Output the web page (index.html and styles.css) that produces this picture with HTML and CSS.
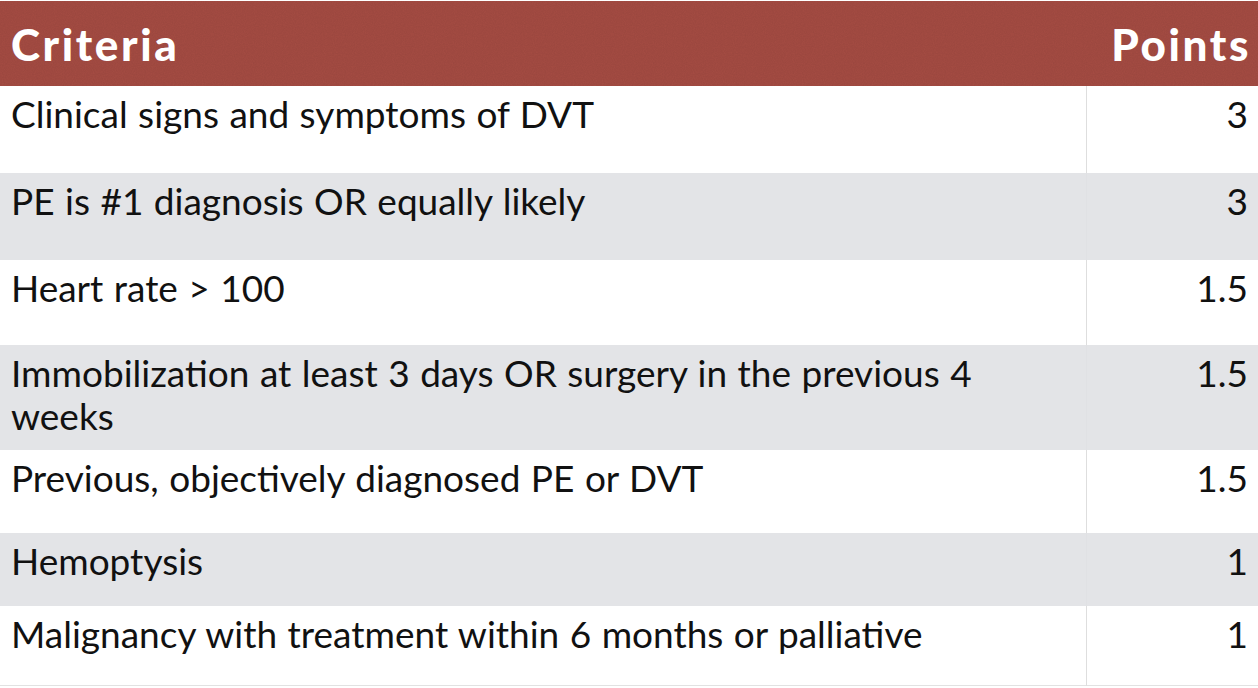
FILE: index.html
```html
<!DOCTYPE html>
<html>
<head>
<meta charset="utf-8">
<link rel="stylesheet" href="styles.css">
</head>
<body>
<table class="wells">
  <thead>
    <tr class="head">
      <th class="crit">Criteria</th>
      <th class="pts">Points</th>
    </tr>
  </thead>
  <tbody>
    <tr class="row white h87">
      <td class="crit">Clinical signs and symptoms of DVT</td>
      <td class="pts">3</td>
    </tr>
    <tr class="row grey h87">
      <td class="crit">PE is #1 diagnosis OR equally likely</td>
      <td class="pts">3</td>
    </tr>
    <tr class="row white h85">
      <td class="crit">Heart rate &gt; 100</td>
      <td class="pts">1.5</td>
    </tr>
    <tr class="row grey h105">
      <td class="crit">Immobilization at least 3 days OR surgery in the previous 4<br>weeks</td>
      <td class="pts">1.5</td>
    </tr>
    <tr class="row white h83">
      <td class="crit">Previous, objectively diagnosed PE or DVT</td>
      <td class="pts">1.5</td>
    </tr>
    <tr class="row grey h73">
      <td class="crit">Hemoptysis</td>
      <td class="pts">1</td>
    </tr>
    <tr class="row white h79 last">
      <td class="crit">Malignancy with treatment within 6 months or palliative</td>
      <td class="pts">1</td>
    </tr>
  </tbody>
</table>
</body>
</html>
```

FILE: styles.css
```css
html, body {
  margin: 0;
  padding: 0;
  background: #ffffff;
}

body {
  padding-top: 1px;
  font-family: "Lato", "Noto Sans", sans-serif;
  color: #111111;
}

.wells {
  width: 1258px;
  border-collapse: collapse;
  table-layout: fixed;
}

.wells .crit {
  width: 1074px;
  text-align: left;
  padding-left: 11px;
}

.wells .pts {
  text-align: right;
  padding-right: 10px;
}

.head {
  height: 85px;
  background-color: #a64c43;
  background-image: url("data:image/svg+xml;utf8,<svg xmlns='http://www.w3.org/2000/svg' width='200' height='200'><filter id='n'><feTurbulence type='fractalNoise' baseFrequency='0.9' numOctaves='2' stitchTiles='stitch'/><feColorMatrix values='0 0 0 0 0  0 0 0 0 0  0 0 0 0 0  0 0 0 0.08 0'/></filter><rect width='200' height='200' filter='url(%23n)'/></svg>");
}

.head th {
  color: #ffffff;
  font-weight: 900;
  font-size: 44px;
  line-height: 50px;
  vertical-align: middle;
  padding-top: 2px;
  letter-spacing: 2.6px;
}

.head .pts {
  padding-right: 7px;
}

.row td {
  vertical-align: top;
  font-size: 37px;
  line-height: 43px;
  padding-top: 6px;
  letter-spacing: 0;
  word-spacing: 1px;
}

.row .pts {
  border-left: 1px solid #dedede;
}

.white { background: #ffffff; }
.grey { background: #e3e4e7; }

.grey .pts { border-left-color: #e0e1e4; }

.last { border-bottom: 1px solid #e2e2e2; }

.h87 { height: 87px; }
.h85 { height: 85px; }
.h105 { height: 105px; }
.h83 { height: 83px; }
.h73 { height: 73px; }
.h79 { height: 79px; }
```
